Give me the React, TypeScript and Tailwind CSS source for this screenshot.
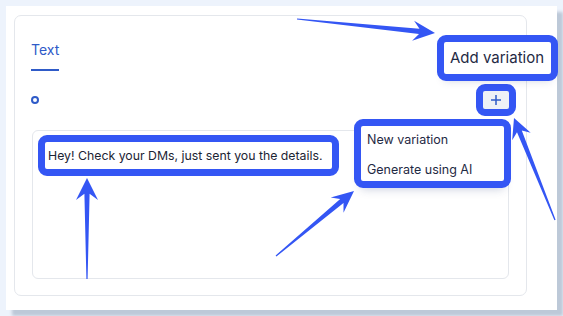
import React from 'react';

const BLUE = '#3456f4';

type Arrow = { from: [number, number]; to: [number, number]; head?: number; half?: number };

const arrows: Arrow[] = [
  { from: [297, 19], to: [435, 33] },
  { from: [87, 279], to: [87, 178], half: 11 },
  { from: [276, 256], to: [354, 191] },
  { from: [555, 220], to: [514, 118], head: 20 },
];

// builds a tapered annotation arrow (thin tail, notched head)
function arrowPoints({ from, to, head = 22, half = 10 }: Arrow) {
  const [x1, y1] = from;
  const [x2, y2] = to;
  const len = Math.hypot(x2 - x1, y2 - y1);
  const ux = (x2 - x1) / len;
  const uy = (y2 - y1) / len;
  const nx = -uy;
  const ny = ux;
  const bx = x2 - ux * head;
  const by = y2 - uy * head;
  const kx = x2 - ux * head * 0.72;
  const ky = y2 - uy * head * 0.72;
  const pts = [
    [x1 + nx * 0.6, y1 + ny * 0.6],
    [kx + nx * 2.6, ky + ny * 2.6],
    [bx + nx * half, by + ny * half],
    [x2, y2],
    [bx - nx * half, by - ny * half],
    [kx - nx * 2.6, ky - ny * 2.6],
    [x1 - nx * 0.6, y1 - ny * 0.6],
  ];
  return pts.map(([x, y]) => `${x.toFixed(1)},${y.toFixed(1)}`).join(' ');
}

const App: React.FC = () => {
  return (
    <div
      className="relative w-[563px] h-[316px] overflow-hidden bg-[#edf3fc] pt-[6px] pl-[6px]"
      style={{ fontFamily: 'Inter, "Open Sans", sans-serif' }}
    >
      <div className="w-[551px] h-[304px] bg-white shadow-[6px_6px_3px_rgba(150,165,185,0.55)] pt-[9px] pl-[8px]">
        <div className="flex w-[513px] h-[281px] flex-col rounded-[7px] border border-[#e4e7ec] px-[17px]">
          <div className="flex pt-[24px]">
            <div className="-ml-[1px] border-b-2 border-[#2f5bc8] pb-[9px] text-[14px] leading-[20px] text-[#2f5bc8]">
              Text
            </div>
          </div>

          <div className="mt-[20px] flex h-[18px] items-center justify-between">
            <span className="-ml-[1px] h-[8px] w-[8px] rounded-full border-[2.5px] border-[#2f5bc8]" />
            <div className="relative flex">
              <button className="flex h-[18px] w-[26px] items-center justify-center rounded-[2px] bg-[#eef1f6] outline-[7px] outline-solid outline-[#3456f4]">
                <svg width="12" height="12" viewBox="0 0 12 12">
                  <path d="M6 1v10M1 6h10" stroke="#2f5bc8" strokeWidth="1.5" />
                </svg>
              </button>

              <div className="absolute left-[-39px] top-[-49px] flex h-[32px] w-[107px] items-center rounded-[2px] bg-white pl-[6px] text-[15px] text-[#1f2a44] outline-[7.5px] outline-solid outline-[#3456f4] shadow-[0_6px_8px_rgba(40,60,120,0.25)]">
                Add variation
              </div>

              <div className="absolute right-[5px] top-[35px] z-10 h-[55px] w-[143px] rounded-[2px] bg-white pl-[6px] text-[12.5px] text-[#1f2a44] outline-[7px] outline-solid outline-[#3456f4] shadow-[0_8px_10px_rgba(40,60,120,0.25)]">
                <div className="h-[28px] leading-[28px]">New variation</div>
                <div className="mt-[2px] h-[28px] leading-[28px]">Generate using AI</div>
              </div>
            </div>
          </div>

          <div className="mt-[21px] flex h-[149px] items-start rounded-[6px] border border-[#e4e7ec] pl-[12px] pt-[11px]">
            <span className="h-[27px] w-[287px] rounded-[2px] px-[3px] text-[12.3px] leading-[27px] text-[#1c2434] outline-[7px] outline-solid outline-[#3456f4]">
              Hey! Check your DMs, just sent you the details.
            </span>
          </div>
        </div>
      </div>

      <svg className="pointer-events-none absolute inset-0" width="563" height="316">
        {arrows.map((a, i) => (
          <polygon key={i} points={arrowPoints(a)} fill={BLUE} />
        ))}
      </svg>
    </div>
  );
};

export default App;
